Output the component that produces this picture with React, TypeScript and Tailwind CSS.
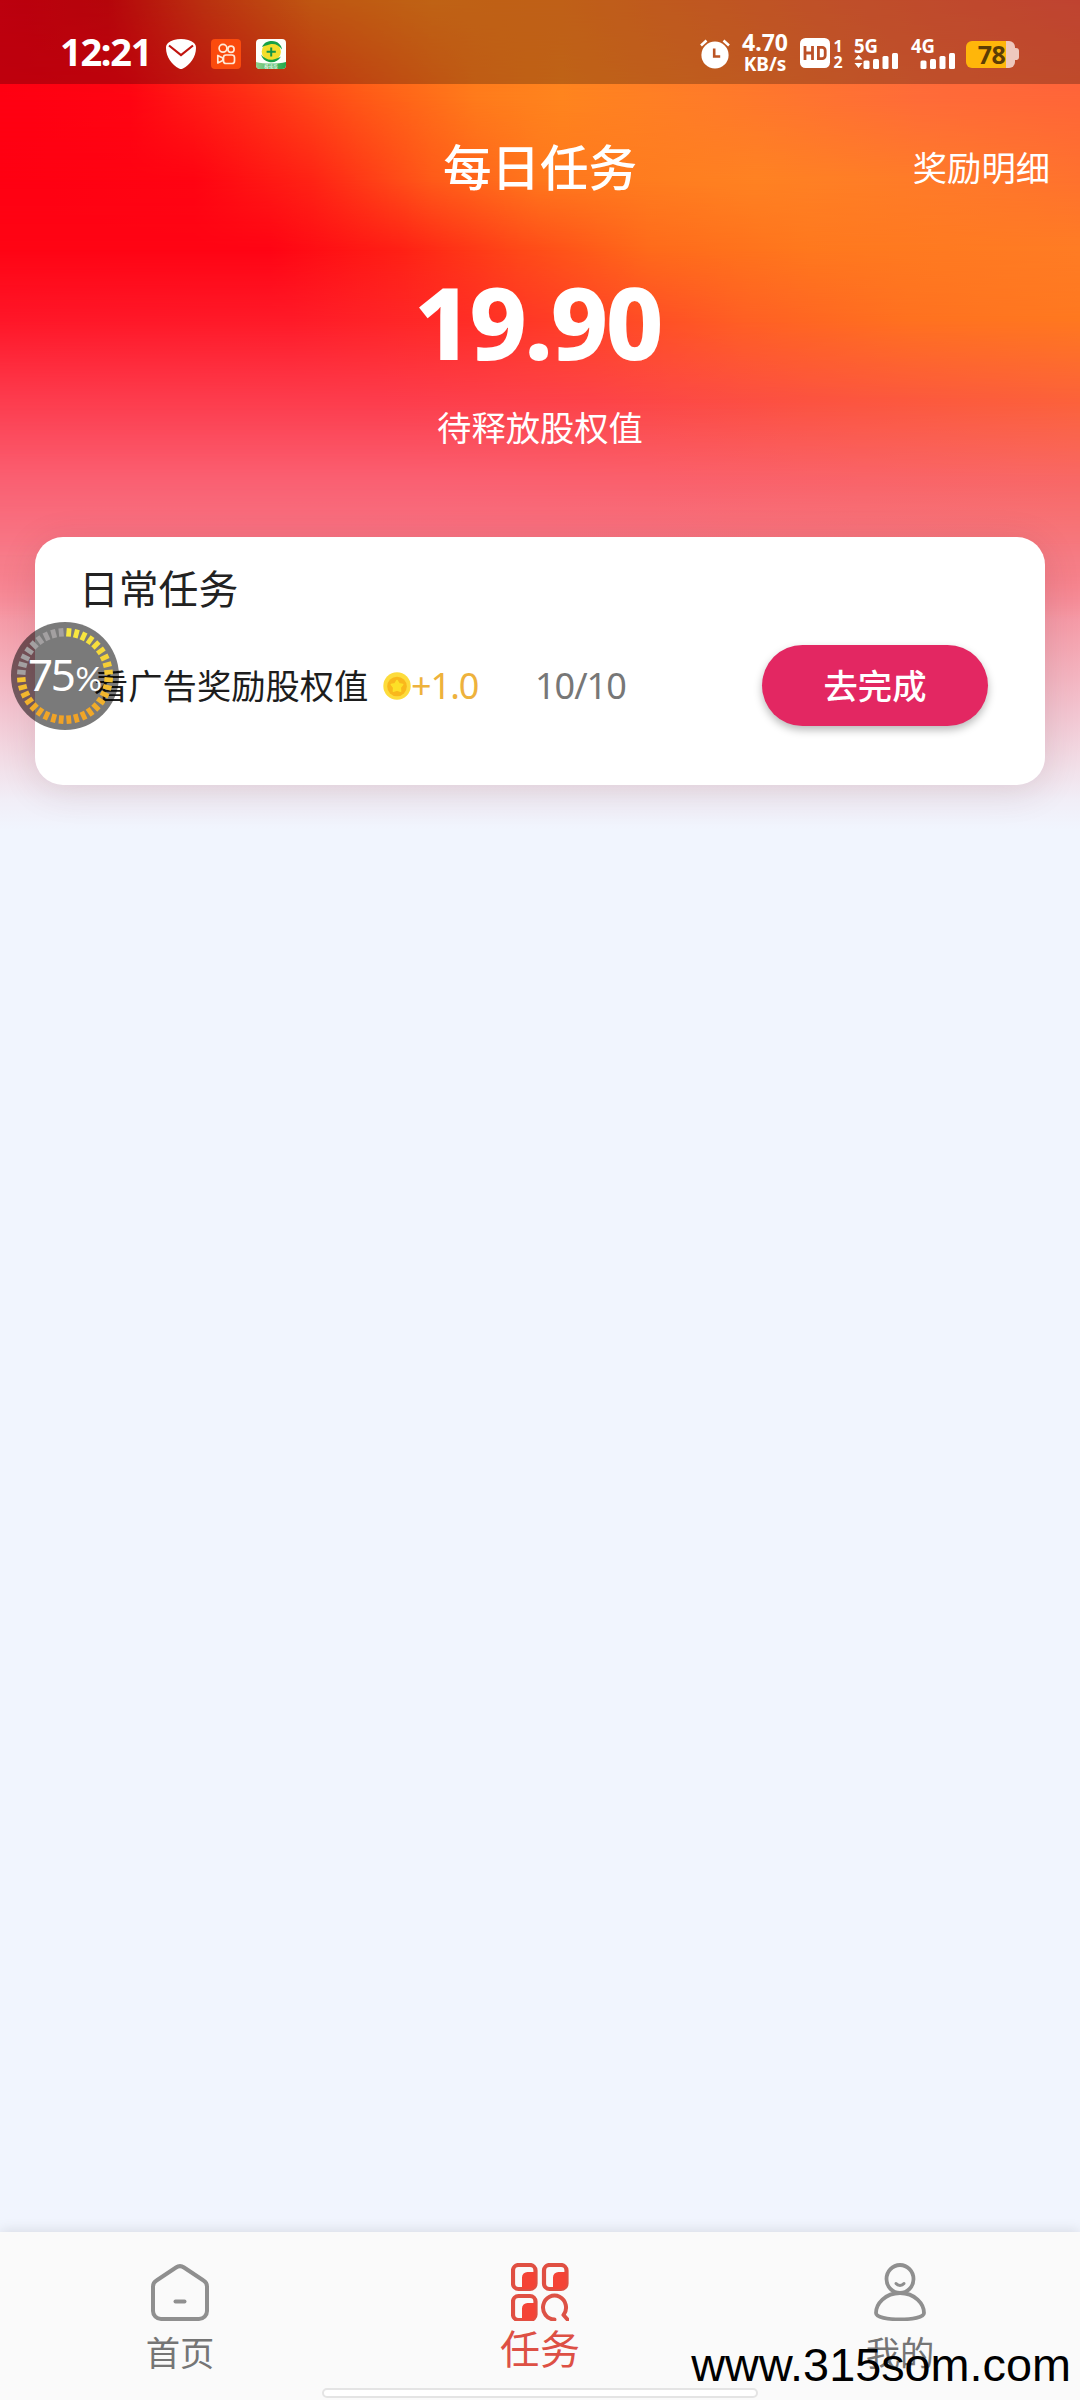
import type { ReactNode } from "react";

type TabItem = { key: string; label: string; icon: ReactNode; active?: boolean };

function ShieldIcon() {
  return (
    <svg className="h-[30px] w-[30px]" viewBox="0 0 30 30">
      <path d="M15 0c5 0 10 1.500 13 4 1.500 1.500 2 3 2 5 0 9-6 17-13 20.500a4 4 0 0 1-4 0C6 26 0 18 0 9c0-2 .5-3.500 2-5C5 1.500 10 0 15 0z" fill="#fff" />
      <path d="M3 6.500l12 9.500L27 6.500" fill="none" stroke="#c0140f" strokeWidth="2.200" />
    </svg>
  );
}

function VideoAppIcon() {
  return (
    <svg className="h-[30px] w-[30px]" viewBox="0 0 30 30">
      <rect width="30" height="30" rx="4" fill="#fb4b0d" />
      <g fill="none" stroke="#ffe9d6" strokeWidth="1.700" strokeLinejoin="round">
        <circle cx="12" cy="9.300" r="3.900" />
        <circle cx="20" cy="10.300" r="3.100" />
        <rect x="12.500" y="16" width="11" height="8.500" rx="2.500" />
        <path d="M6.800 16.500v7.500l5-2.500v-2.500z" />
      </g>
    </svg>
  );
}

function GuardAppIcon() {
  return (
    <svg className="h-[30px] w-[30px]" viewBox="0 0 30 30">
      <defs>
        <clipPath id="guard"><rect width="30" height="30" rx="4" /></clipPath>
        <linearGradient id="hill" x1="0" x2="1">
          <stop offset="0" stopColor="#8fd08c" />
          <stop offset="1" stopColor="#22a94b" />
        </linearGradient>
      </defs>
      <g clipPath="url(#guard)">
        <rect width="30" height="30" fill="#fdfffb" />
        <circle cx="15.300" cy="12.800" r="9.600" fill="#f2de2c" />
        <path d="M6 8C8 3.500 12 2 16 2c6 .2 9.500 4 10 8.500C23 6 18 4 13.500 5.500 10 6.300 7.500 7.500 6 8z" fill="#17a045" />
        <path d="M25 17.500C22.500 22 18 24 13 23c-4-1-7-3.500-8-7.500C8 19.500 13 21.500 17.500 20.500c3.500-.8 6-2 7.500-3z" fill="#17a045" />
        <path d="M14.200 8.500h2v3.200h3.600v2h-3.600V17.500h-2v-3.800h-3.600v-2h3.600z" fill="#149447" />
        <path d="M0 23c8 2 22 2 30 0v7H0z" fill="url(#hill)" />
      </g>
      <text x="15" y="28.800" fontSize="4.500" textAnchor="middle" fill="#fff" className="font-['Noto_Sans_CJK_SC',sans-serif]">极速版</text>
    </svg>
  );
}

function AlarmIcon() {
  return (
    <svg className="h-[30px] w-[30px]" viewBox="0 0 30 30">
      <circle cx="15" cy="16" r="13.600" fill="#fff" />
      <path d="M1 6.500L6.500 1.500M29 6.500L23.500 1.500" stroke="#fff" strokeWidth="2.600" />
      <path d="M14.200 9.500v8h6" fill="none" stroke="#bb5424" strokeWidth="2.600" />
    </svg>
  );
}

function HdIcon() {
  return (
    <svg className="h-[30px] w-[30px]" viewBox="0 0 30 30">
      <rect width="30" height="30" rx="5.500" fill="#fff" />
      <path d="M5 8v14M12.500 8v14M5 15h7.500M17 9.400h5.200a3 3 0 0 1 3 3v5.200a3 3 0 0 1-3 3H18.400V9.400" fill="none" stroke="#bb5028" strokeWidth="2.800" />
    </svg>
  );
}

function Signal({ label, arrows }: { label: string; arrows?: boolean }) {
  return (
    <svg className="h-[34px] w-[45px] overflow-visible" viewBox="0 -4 45 34">
      <text x="0" y="14" fontSize="19" fontWeight="700" fill="#fff" textLength="24" lengthAdjust="spacingAndGlyphs" className="font-['Noto_Sans',sans-serif]">{label}</text>
      {arrows && <path d="M.500 20.500h8L4.500 16zM.500 24h8l-4 5z" fill="#fff" />}
      <g fill="#fff">
        <rect x="9.500" y="21.500" width="6" height="8.500" rx="1.500" />
        <rect x="19" y="20" width="6" height="10" rx="1.500" />
        <rect x="28.500" y="17" width="6" height="13" rx="1.500" />
        <rect x="38" y="14" width="6" height="16" rx="1.500" />
      </g>
    </svg>
  );
}

function Battery() {
  return (
    <div className="flex items-center">
      <div className="flex h-[27px] w-[49px] items-center justify-center rounded-[6px] bg-[linear-gradient(90deg,#ffb60a_0_40px,#eec8bd_40px)] pl-0.5 font-['Noto_Sans',sans-serif] text-[25px] leading-none font-bold tracking-[-0.5px] text-[#5c3d05]">
        78
      </div>
      <div className="h-3 w-1 rounded-r-[3px] bg-[#eec8bd]" />
    </div>
  );
}

function StatusBar() {
  return (
    <div className="flex h-[84px] items-center bg-black/25 pt-6 pl-[60px] font-['Noto_Sans',sans-serif] text-white">
      <span className="w-[106px] pb-1.5 text-[38px] leading-none font-bold tracking-[-1.3px]">12:21</span>
      <div className="flex gap-[15px]">
        <ShieldIcon />
        <VideoAppIcon />
        <GuardAppIcon />
      </div>
      <div className="ml-auto flex items-center pr-[61px]">
        <AlarmIcon />
        <div className="mr-[11px] ml-[11px] flex w-[48px] flex-col items-center pb-[2px] text-center font-bold">
          <span className="text-[23px] leading-[22px]">4.70</span>
          <span className="text-[19px] leading-[22px]">KB/s</span>
        </div>
        <div className="flex gap-0.5">
          <HdIcon />
          <div className="flex w-[12px] flex-col items-center text-[16px] leading-[16px] font-bold">
            <span>1</span>
            <span>2</span>
          </div>
        </div>
        <div className="ml-2.5 flex gap-3 pb-1">
          <Signal label="5G" arrows />
          <Signal label="4G" />
        </div>
        <div className="ml-2.5"><Battery /></div>
      </div>
    </div>
  );
}

// Each layer fades in below the previous one, so the rows blend into a mesh
function HeaderBackground() {
  return (
    <div className="absolute inset-x-0 top-0 h-[860px] bg-[linear-gradient(90deg,#fb0014_0%,#f2080f_10%,#f94216_19%,#ff7418_29%,#ff841c_40%,#ff8020_52%,#ff6a38_78%,#ff5a42_100%)]">
      <div className="absolute inset-0 bg-[linear-gradient(90deg,#ff0012_0%,#ff0412_12%,#ff2c15_23%,#ff5617_33%,#ff7a1b_44%,#ff841e_52%,#ff7c28_65%,#ff6c38_85%,#ff6638_100%)] [mask-image:linear-gradient(#0000_0,#000_100px)]" />
      <div className="absolute inset-0 bg-[linear-gradient(90deg,#ff0012_0%,#ff0412_18%,#ff2415_29%,#ff5a19_40%,#ff771d_50%,#ff8222_70%,#ff7a2a_88%,#ff722e_100%)] [mask-image:linear-gradient(#0000_100px,#000_180px)]" />
      <div className="absolute inset-0 bg-[linear-gradient(90deg,#ff0414_0%,#ff0414_25%,#ff2015_37%,#ff4818_48%,#ff6a1b_60%,#ff781e_75%,#ff7c24_100%)] [mask-image:linear-gradient(#0000_180px,#000_250px)]" />
      <div className="absolute inset-0 bg-[linear-gradient(90deg,#ff1628_0%,#ff1a28_27%,#ff2e26_44%,#ff4426_55%,#ff6024_69%,#ff7120_84%,#ff7820_100%)] [mask-image:linear-gradient(#0000_250px,#000_320px)]" />
      <div className="absolute inset-0 bg-[linear-gradient(90deg,#fd3c4e_0%,#fd3c4c_35%,#fd4348_55%,#fc5340_75%,#fc623a_100%)] [mask-image:linear-gradient(#0000_320px,#000_400px)]" />
      <div className="absolute inset-0 bg-[linear-gradient(90deg,#fa6072_0%,#fa6072_40%,#fa606c_60%,#f86866_100%)] [mask-image:linear-gradient(#0000_400px,#000_480px)]" />
      <div className="absolute inset-0 bg-[linear-gradient(90deg,#f77c8a_0%,#f77a88_50%,#f57c83_100%)] [mask-image:linear-gradient(#0000_480px,#000_560px)]" />
      <div className="absolute inset-0 bg-[linear-gradient(#f77f8c_560px,#f5a4b0_640px,#f3c4d0_710px,#f2dfe8_765px,#f1eef7_800px,#f1f5fe_830px)] [mask-image:linear-gradient(#0000_540px,#000_620px)]" />
    </div>
  );
}

function Coin() {
  return (
    <svg className="h-7 w-7" viewBox="0 0 28 28">
      <circle cx="14" cy="14" r="13.700" fill="#fddc3c" />
      <circle cx="14" cy="14.500" r="9.800" fill="#f9b81c" />
      <path d="M14 8.500l2 3.200 3.700.8-2.400 3 .3 3.800-3.600-1.300-3.600 1.300.3-3.800-2.400-3 3.700-.8z" fill="#fde027" stroke="#fde027" strokeLinejoin="round" strokeWidth="1.500" />
    </svg>
  );
}

function ProgressBubble({ percent }: { percent: number }) {
  const total = 36;
  const lit = Math.round((percent / 100) * total);
  return (
    <div className="absolute top-[622px] left-[11px] flex h-[108px] w-[108px] items-center justify-center rounded-full bg-black/52">
      <svg className="absolute inset-0" viewBox="-54 -54 108 108">
        {Array.from({ length: total }, (_, i) => {
          const deg = i * 10 + 5;
          // yellow at the top, orange at the bottom
          const mix = (1 - Math.cos((deg * Math.PI) / 180)) / 2;
          const fill = i < lit ? `rgb(${248 - mix * 8},${232 - mix * 70},${64 - mix * 26})` : "#a3a0a1";
          return <rect key={i} x="-2.400" y="-48" width="4.800" height="8.500" fill={fill} transform={`rotate(${deg})`} />;
        })}
      </svg>
      <div className="relative flex items-baseline pb-1 font-['Noto_Sans',sans-serif] leading-none text-white">
        <span className="text-[44px] tracking-[-2.5px]">{percent}</span>
        <span className="ml-0.5 font-[Lato,sans-serif] text-[33px]">%</span>
      </div>
    </div>
  );
}

function TaskCard() {
  return (
    <section className="mx-[35px] h-[248px] rounded-[28px] bg-white px-11 pt-6 shadow-[0_6px_36px_rgba(90,40,50,0.14)]">
      <h2 className="text-[39.8px] leading-[52px] text-[#222]">日常任务</h2>
      <div className="mt-[32px] flex h-[81px] items-center pl-[15px] text-[34.3px] leading-none text-[#1d1d1d]">
        <span className="w-[289px] pb-[3px] whitespace-nowrap">看广告奖励股权值</span>
        <Coin />
        <span className="w-[124px] font-['Noto_Sans',sans-serif] text-[36px] tracking-[-1px] text-[#eeb23c]">+1.0</span>
        <span className="font-['Noto_Sans',sans-serif] text-[36px] tracking-[-1px] text-[#777]">10/10</span>
        <button className="mr-[13px] ml-auto h-[81px] w-[226px] rounded-full bg-[#e32762] pb-[3px] font-medium text-white shadow-[0_4px_8px_rgba(0,0,0,0.28)]">
          去完成
        </button>
      </div>
    </section>
  );
}

function HomeIcon() {
  return (
    <svg className="h-[58px] w-[58px]" viewBox="0 0 58 58" fill="none" stroke="#8f8f8f" strokeWidth="4" strokeLinecap="round">
      <path d="M25 4.500a7 7 0 0 1 8 0L52.500 17.500a7 7 0 0 1 3.500 6V48a8 8 0 0 1-8 8H10a8 8 0 0 1-8-8V23.500a7 7 0 0 1 3.500-6z" />
      <path d="M24.500 38.500h9" />
    </svg>
  );
}

function TasksIcon() {
  const tiles = [[0, 0], [31, 0], [0, 31]];
  return (
    <svg className="h-[58px] w-[58px]" viewBox="0 0 58 58">
      {tiles.map(([x, y]) => (
        <g key={`${x}-${y}`} transform={`translate(${x} ${y})`}>
          <rect x="2" y="2" width="22.500" height="24" rx="5.500" fill="none" stroke="#e04f42" strokeWidth="4.200" />
          <path d="M16.500 9h8v11.500a5.500 5.500 0 0 1-5.500 5.500h-8V14.500A5.500 5.500 0 0 1 16.500 9z" fill="#f44336" />
        </g>
      ))}
      <path d="M43.500 56.500a11.500 12 0 1 1 9-4.500l4 4.500" fill="none" stroke="#dd5246" strokeWidth="4" strokeLinecap="round" strokeLinejoin="round" />
    </svg>
  );
}

function UserIcon() {
  return (
    <svg className="h-[58px] w-[58px]" viewBox="0 0 58 58" fill="none" stroke="#8f8f8f" strokeWidth="3.800" strokeLinecap="round">
      <ellipse cx="29" cy="16" rx="13.500" ry="14" />
      <path d="M25 20.500c2 2.500 6 2.500 8 0" strokeWidth="3" />
      <path d="M29 30C14 30 5 41 5 50c0 8.500 48 8.500 48 0 0-9-9-20-24-20z" />
    </svg>
  );
}

const tabs: TabItem[] = [
  { key: "home", label: "首页", icon: <HomeIcon /> },
  { key: "tasks", label: "任务", icon: <TasksIcon />, active: true },
  { key: "me", label: "我的", icon: <UserIcon /> },
];

function TabBar() {
  return (
    <nav className="relative mt-auto grid h-[168px] grid-cols-3 bg-[#fafafa] shadow-[0_-2px_12px_rgba(0,0,0,0.1)]">
      {tabs.map((tab) => (
        <div key={tab.key} className="flex flex-col items-center pt-[31px]">
          {tab.icon}
          {tab.active
            ? <span className="mt-[3px] text-[40px] leading-[46px] text-[#dd5044]">{tab.label}</span>
            : <span className="mt-[7px] text-[34.3px] leading-[46px] text-[#757575]">{tab.label}</span>}
        </div>
      ))}
      {/* gesture bar */}
      <div className="absolute bottom-0.5 left-[322px] h-[10px] w-[436px] rounded-full border-2 border-[#e4e4e4] bg-white" />
    </nav>
  );
}

export default function App() {
  return (
    <div className="relative flex h-[2400px] w-[1080px] flex-col overflow-hidden bg-[#f1f5fe] font-['Noto_Sans_CJK_SC',sans-serif]">
      <HeaderBackground />
      <div className="relative">
        <StatusBar />
        <header className="grid h-[168px] grid-cols-3 items-center text-white">
          <span />
          <h1 className="pb-1.5 text-center text-[48.5px] leading-none font-medium">每日任务</h1>
          <span className="pr-[30px] pb-[3px] text-right text-[34.3px] leading-none">奖励明细</span>
        </header>
        <div className="flex h-[285px] flex-col items-center text-white">
          <p className="mt-[19px] pr-[5px] font-['Noto_Sans',sans-serif] text-[100px] leading-[100px] font-extrabold tracking-[-2.5px]">19.90</p>
          <p className="mt-[38px] text-[34.3px] leading-none">待释放股权值</p>
        </div>
        <TaskCard />
      </div>
      <ProgressBubble percent={75} />
      <TabBar />
      <div className="absolute right-[9px] bottom-[11px] font-['Liberation_Sans',Arial,sans-serif] text-[46.800px] leading-none text-black">
        www.315som.com
      </div>
    </div>
  );
}
